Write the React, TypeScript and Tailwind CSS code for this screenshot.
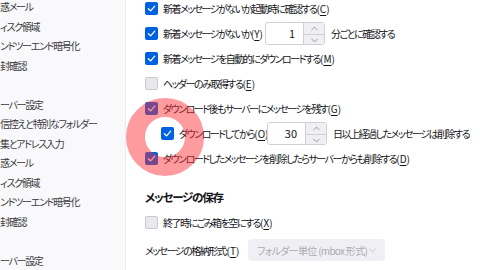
import { ChevronDown, ChevronUp } from "lucide-react";

const font = "font-['Noto_Sans_CJK_JP','Noto_Sans',sans-serif] [font-feature-settings:'palt']";

const sideItems = [
  "惑メール",
  "ィスク領域",
  "ンドツーエンド暗号化",
  "封確認",
  "",
  "ーバー設定",
  "信控えと特別なフォルダー",
  "集とアドレス入力",
  "惑メール",
  "ィスク領域",
  "ンドツーエンド暗号化",
  "封確認",
  "",
  "ーバー設定",
];

function Check({ on = true }: { on?: boolean }) {
  if (!on) {
    return <span className="w-[13px] h-[13px] shrink-0 rounded-[2px] border border-[#c9c9cf] bg-[#e9e9ed]" />;
  }
  return (
    <span className="w-[13px] h-[13px] shrink-0 rounded-[2px] bg-[#0061e0] flex items-center justify-center">
      <svg width="9" height="9" viewBox="0 0 10 10" fill="none">
        <path d="M1.5 5.2 L4 7.6 L8.6 2.4" stroke="white" strokeWidth="1.4" strokeLinecap="round" strokeLinejoin="round" />
      </svg>
    </span>
  );
}

function Key({ k }: { k: string }) {
  return (
    <span className="tracking-normal">
      (<span className="underline underline-offset-[2px]">{k}</span>)
    </span>
  );
}

function Spin({ value }: { value: string }) {
  return (
    <span className="flex items-center h-[23px] w-[60px] rounded-[3px] border border-[#cfcfd8] bg-white tracking-normal">
      <span className="flex-1 text-right pr-[8px] text-[11px]">{value}</span>
      <span className="flex flex-col w-[21px] h-full border-l border-[#cfcfd8] bg-[#f0f0f4]">
        <span className="flex-1 flex items-center justify-center border-b border-[#cfcfd8]">
          <ChevronUp size={11} strokeWidth={1.3} className="text-[#5b5b66]" />
        </span>
        <span className="flex-1 flex items-center justify-center">
          <ChevronDown size={11} strokeWidth={1.3} className="text-[#5b5b66]" />
        </span>
      </span>
    </span>
  );
}

export default function App() {
  return (
    <div className={`relative w-[480px] h-[270px] overflow-hidden flex bg-white text-[#15141a] whitespace-nowrap ${font}`}>
      <aside className="w-[126px] shrink-0 bg-[#f9f9fb] border-r border-[#ececee] overflow-hidden">
        <ul className="mt-[-3px] text-[10px] tracking-[-1.3px] text-[#3a3a40]">
          {sideItems.map((t, i) => (
            <li key={i} className="h-[19.5px] leading-[19.5px]">
              {t}
            </li>
          ))}
        </ul>
      </aside>

      <main className="flex-1 pl-[19px] text-[10px] tracking-[-1.5px]">
        <div className="mt-[-4px] flex flex-col">
          <label className="h-[25px] flex items-center gap-[5px]">
            <Check />
            <span>新着メッセージがないか起動時に確認する<Key k="C" /></span>
          </label>
          <label className="h-[25px] flex items-center gap-[5px]">
            <Check />
            <span className="w-[97px]">新着メッセージがないか<Key k="Y" /></span>
            <Spin value="1" />
            <span className="ml-[1px]">分ごとに確認する</span>
          </label>
          <label className="h-[25px] flex items-center gap-[5px]">
            <Check />
            <span>新着メッセージを自動的にダウンロードする<Key k="M" /></span>
          </label>
          <label className="h-[25px] flex items-center gap-[5px]">
            <Check on={false} />
            <span>ヘッダーのみ取得する<Key k="E" /></span>
          </label>
          <label className="h-[25px] flex items-center gap-[5px]">
            <Check />
            <span>ダウンロード後もサーバーにメッセージを残す<Key k="G" /></span>
          </label>
          <label className="h-[25px] flex items-center gap-[5px] pl-[16px]">
            <Check />
            <span className="w-[83px]">ダウンロードしてから<Key k="O" /></span>
            <Spin value="30" />
            <span className="ml-[1px]">日以上経過したメッセージは削除する</span>
          </label>
          <label className="h-[25px] flex items-center gap-[5px]">
            <Check />
            <span>ダウンロードしたメッセージを削除したらサーバーからも削除する<Key k="D" /></span>
          </label>
        </div>

        <h2 className="mt-[18px] h-[16px] leading-[16px] text-[11.5px] tracking-[-1.2px] font-bold">メッセージの保存</h2>

        <label className="mt-[5px] h-[25px] flex items-center gap-[5px]">
          <Check on={false} />
          <span>終了時にごみ箱を空にする<Key k="X" /></span>
        </label>

        <div className="mt-[3px] flex items-center gap-[8px] h-[24px]">
          <span className="w-[95px]">メッセージの格納形式:<Key k="T" /></span>
          <span className="h-[22px] w-[137px] rounded-[4px] bg-[#f0f0f4] flex items-center pl-[9px] pr-[7px] text-[#a9a9b1] tracking-[-0.7px]">
            <span className="flex-1">フォルダー単位 (mbox 形式)</span>
            <ChevronDown size={11} strokeWidth={1.3} />
          </span>
        </div>
      </main>

      <div className="pointer-events-none absolute left-[126px] top-[98px] w-[78px] h-[78px] rounded-full border-[19px] border-[rgba(250,45,55,0.48)]" />
    </div>
  );
}
